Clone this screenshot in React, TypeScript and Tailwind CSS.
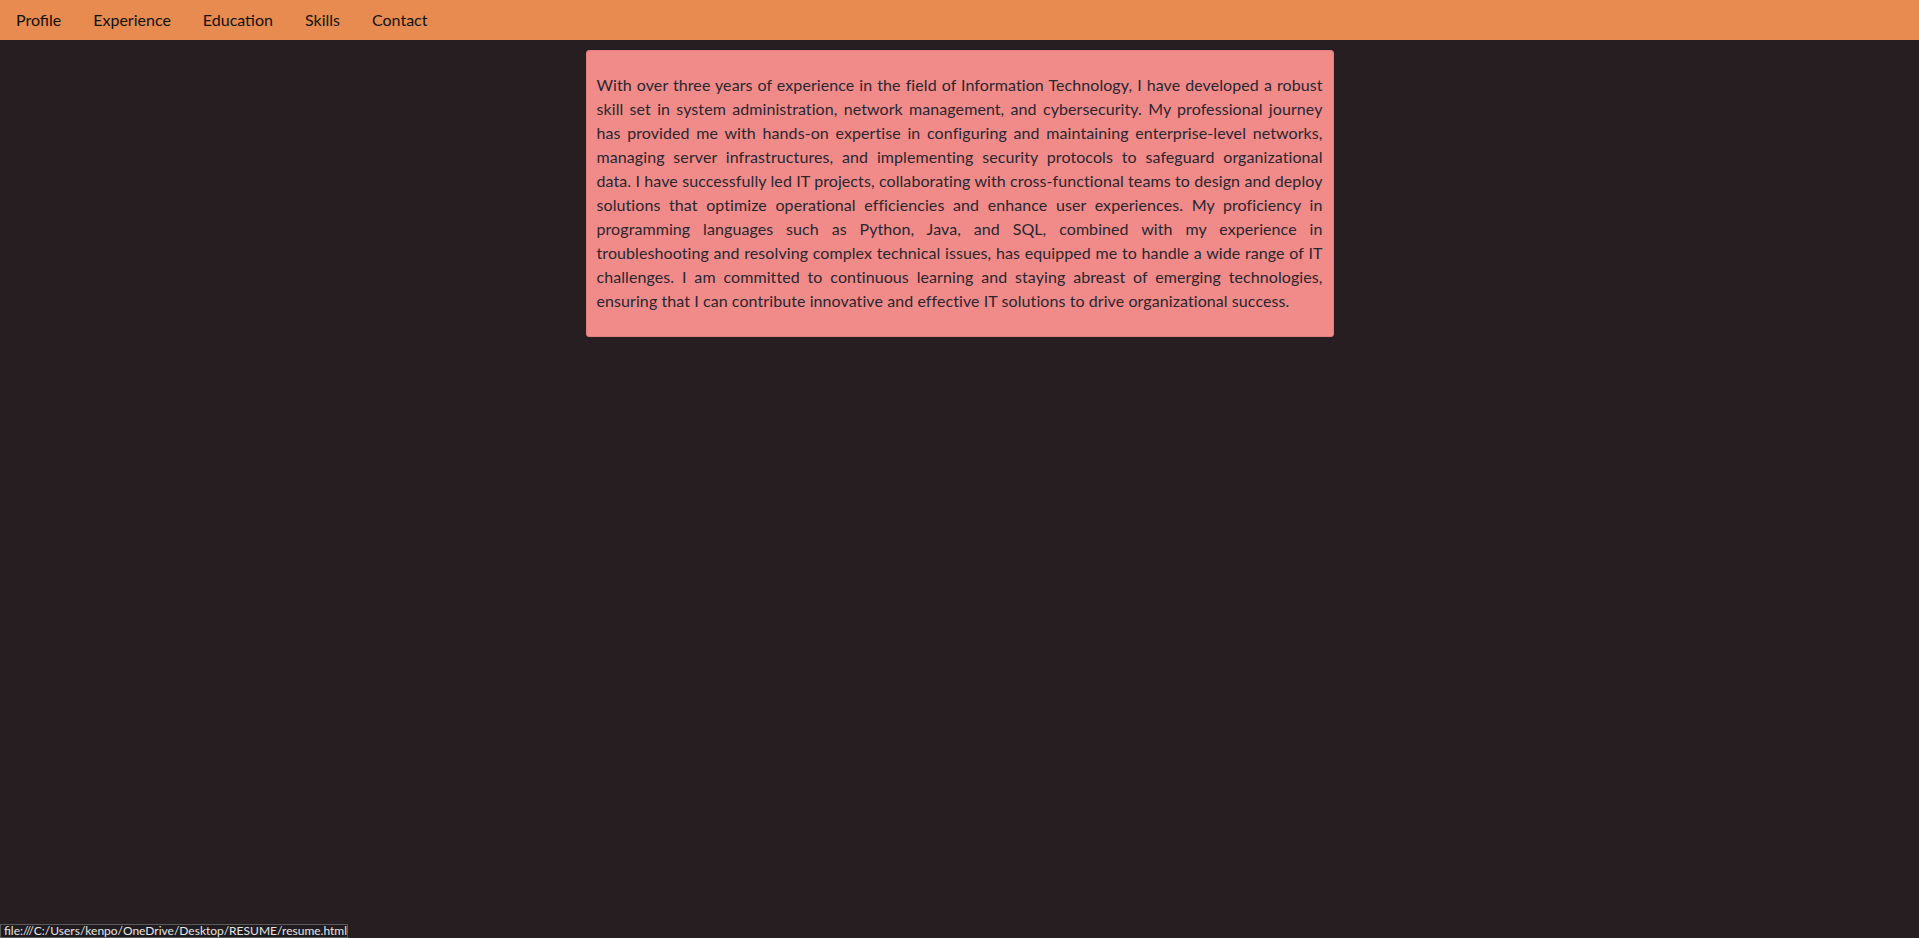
import React from "react";

const lines = [
  "With over three years of experience in the field of Information Technology, I have developed a robust",
  "skill set in system administration, network management, and cybersecurity. My professional journey",
  "has provided me with hands-on expertise in configuring and maintaining enterprise-level networks,",
  "managing server infrastructures, and implementing security protocols to safeguard organizational",
  "data. I have successfully led IT projects, collaborating with cross-functional teams to design and deploy",
  "solutions that optimize operational efficiencies and enhance user experiences. My proficiency in",
  "programming languages such as Python, Java, and SQL, combined with my experience in",
  "troubleshooting and resolving complex technical issues, has equipped me to handle a wide range of IT",
  "challenges. I am committed to continuous learning and staying abreast of emerging technologies,",
];
const lastLine =
  "ensuring that I can contribute innovative and effective IT solutions to drive organizational success.";

export default function App() {
  const nav = ["Profile", "Experience", "Education", "Skills", "Contact"];
  return (
    <div
      className="min-h-[938px] w-full bg-[#261e21] relative"
      style={{ fontFamily: '"Segoe UI", Lato, "Noto Sans", sans-serif' }}
    >
      <nav className="h-[40px] bg-[#e88b50] flex items-center">
        {nav.map((n) => (
          <a key={n} className="px-4 text-[16px] leading-[42px] text-[#111] cursor-pointer">
            {n}
          </a>
        ))}
      </nav>
      <div className="flex justify-center pt-[10px]">
        <div className="w-[748px] bg-[#f08b89] border border-[#e07e7c] rounded-[3px] pt-[22px] pb-[23px] px-[10px]">
          <div className="text-[16px] leading-[24px] text-[#2a2630] tracking-[0.08px]">
            {lines.map((l, i) => (
              <div key={i} className="text-justify [text-align-last:justify]">
                {l}
              </div>
            ))}
            <div>{lastLine}</div>
          </div>
        </div>
      </div>
      <div className="absolute left-0 bottom-0 h-[14px] w-[348px] bg-[#1f1b1e] border border-[#5a5a5a] text-[12px] leading-[12px] text-[#e6e6e6] pl-[3px] overflow-hidden whitespace-nowrap">
        file:///C:/Users/kenpo/OneDrive/Desktop/RESUME/resume.html
      </div>
    </div>
  );
}
